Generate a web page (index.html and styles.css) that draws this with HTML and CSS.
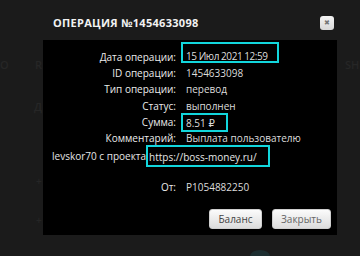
FILE: index.html
```html
<!DOCTYPE html>
<html lang="ru">
<head>
    <meta charset="UTF-8">
    <meta name="viewport" content="width=device-width, initial-scale=1.0">
    <title>Операция</title>
    <link rel="stylesheet" href="styles.css">
</head>
<body>
    <!-- Page behind the dialog -->
    <div class="page">
        <span class="ghost ghost-o">O</span>
        <span class="ghost ghost-r">R</span>
        <span class="ghost ghost-sh">SH</span>
        <span class="ghost ghost-d">Д</span>
        <span class="ghost plus plus-1">+</span>
        <span class="ghost plus plus-2">+</span>
        <div class="round"></div>
    </div>

    <!-- Dialog -->
    <div class="dialog">
        <div class="dialog-head">
            <h1>Операция №1454633098</h1>
            <button class="close-btn" title="Закрыть">&#x2716;</button>
        </div>
        <div class="dialog-body">
            <div class="row">
                <span class="label">Дата операции:</span>
                <span class="value boxed box-date">15 Июл 2021 12:59</span>
            </div>
            <div class="row">
                <span class="label">ID операции:</span>
                <span class="value">1454633098</span>
            </div>
            <div class="row">
                <span class="label">Тип операции:</span>
                <span class="value">перевод</span>
            </div>
            <div class="row">
                <span class="label">Статус:</span>
                <span class="value">выполнен</span>
            </div>
            <div class="row">
                <span class="label">Сумма:</span>
                <span class="value boxed box-sum">8.51 &#x20BD;</span>
            </div>
            <div class="row">
                <span class="label">Комментарий:</span>
                <span class="value">Выплата пользователю</span>
            </div>
            <div class="comment-tail">levskor70 с проекта<span class="boxed box-url">https://boss-money.ru/</span></div>
            <div class="row row-from">
                <span class="label">От:</span>
                <span class="value">P1054882250</span>
            </div>
            <div class="actions">
                <button class="btn btn-balance">Баланс</button>
                <button class="btn btn-close">Закрыть</button>
            </div>
        </div>
    </div>
</body>
</html>
```

FILE: styles.css
```css
/* General styling */
body {
    margin: 0;
    width: 360px;
    height: 256px;
    overflow: hidden;
    background-color: #1b1b1b;
    font-family: 'Open Sans', 'DejaVu Sans', sans-serif;
    color: #e6e6e6;
    position: relative;
}

/* Faded page behind the dialog */
.page {
    height: 100%;
    font-size: 11px;
    font-weight: 600;
}

.ghost {
    position: absolute;
    color: #262626;
}

.ghost-o { left: 0; top: 57px; }
.ghost-r { left: 35px; top: 57px; }
.ghost-sh { left: 345px; top: 57px; }
.ghost-d { left: 34px; top: 99px; }

.plus {
    left: 36px;
    font-size: 10px;
}

.plus-1 { top: 174px; }
.plus-2 { top: 213px; }

.round {
    position: absolute;
    left: 250px;
    top: 250px;
    width: 20px;
    height: 6px;
    border-radius: 10px 10px 0 0 / 6px 6px 0 0;
    background-color: #1c2d30;
}

/* Dialog */
.dialog {
    position: absolute;
    left: 43px;
    top: 0;
    width: 294px;
}

.dialog-head {
    height: 40px;
    display: flex;
    align-items: center;
    justify-content: space-between;
    padding: 5px 3px 0 10px;
    box-sizing: border-box;
}

h1 {
    margin: 0;
    font-size: 11px;
    font-weight: 700;
    text-transform: uppercase;
    letter-spacing: 0.3px;
    color: #f2f2f2;
}

.close-btn {
    width: 14px;
    height: 14px;
    padding: 0;
    border: none;
    border-radius: 3px;
    background: linear-gradient(#f4f4f4, #d8d8d8);
    color: #777;
    font-size: 7px;
    line-height: 14px;
    cursor: pointer;
}

.dialog-body {
    background-color: #000;
    height: 195px;
    padding-top: 9px;
    box-sizing: border-box;
    font-size: 10px;
}

.row {
    display: grid;
    grid-template-columns: 133px 1fr;
    column-gap: 10px;
    height: 16.2px;
    line-height: 16.2px;
    align-items: start;
}

.label {
    text-align: right;
    color: #ececec;
}

.value {
    color: #dcdcdc;
}

.boxed {
    border: 2px solid #12d6dc;
    box-sizing: border-box;
}

.box-date {
    justify-self: start;
    width: 98px;
    height: 21px;
    margin: -7px 0 0 -5px;
    padding: 5px 0 0 3px;
    line-height: 14px;
    letter-spacing: -0.45px;
    white-space: nowrap;
}

.box-sum {
    justify-self: start;
    width: 47px;
    height: 19px;
    margin: -1px 0 0 -5px;
    padding: 1px 0 0 3px;
    line-height: 14px;
}

.comment-tail {
    display: flex;
    align-items: center;
    height: 22px;
    margin-top: -1px;
    padding-left: 9px;
}

.box-url {
    width: 124px;
    height: 22px;
    padding: 2px 0 0 1px;
    line-height: 16px;
}

.row-from {
    margin-top: 12px;
}

.actions {
    display: flex;
    justify-content: flex-end;
    gap: 10px;
    margin-top: 14px;
    padding-right: 6px;
}

button {
    font-family: 'Open Sans', 'DejaVu Sans', sans-serif;
}

.btn {
    height: 20px;
    padding: 0;
    border: 1px solid #cfcfcf;
    border-radius: 3px;
    background: linear-gradient(#fbfbfb, #dcdcdc);
    color: #444;
    font-size: 10px;
    cursor: pointer;
}

.btn-balance {
    width: 53px;
}

.btn-close {
    width: 59px;
    color: #666;
}
```
